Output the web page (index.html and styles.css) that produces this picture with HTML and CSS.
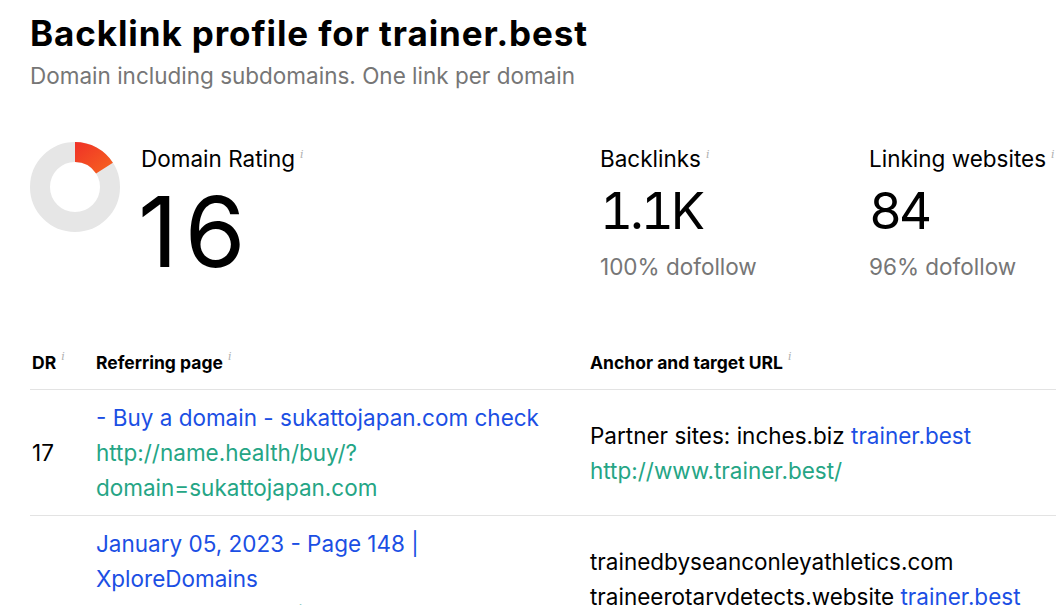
FILE: index.html
```html
<!DOCTYPE html>
<html>
	<head>
		<title>Backlink profile</title>
		<link rel="stylesheet" href="styles.css">
	</head>
	<body>
		<div class="page">
			<h1 class="title">Backlink profile for trainer.best</h1>
			<p class="subtitle">Domain including subdomains. One link per domain</p>

			<div class="stats">
				<div class="stat stat-dr">
					<svg class="donut" width="90" height="90" viewBox="0 0 90 90">
						<defs>
							<linearGradient id="dr-grad" x1="0" y1="0" x2="1" y2="1">
								<stop offset="0" stop-color="#ef3127"/>
								<stop offset="1" stop-color="#f76520"/>
							</linearGradient>
						</defs>
						<circle cx="45" cy="45" r="35" fill="none" stroke="#e6e6e6" stroke-width="20"/>
						<!-- 16% of the ring, starting at 12 o'clock -->
						<path d="M45 0 A45 45 0 0 1 82.9 20.7 L66.1 31.5 A25 25 0 0 0 45 20 Z" fill="url(#dr-grad)"/>
					</svg>
					<div class="stat-body">
						<div class="stat-label">Domain Rating<span class="info">i</span></div>
						<div class="stat-big">16</div>
					</div>
				</div>
				<div class="stat stat-backlinks">
					<div class="stat-label">Backlinks<span class="info">i</span></div>
					<div class="stat-value">1.1K</div>
					<div class="stat-sub">100% dofollow</div>
				</div>
				<div class="stat">
					<div class="stat-label">Linking websites<span class="info">i</span></div>
					<div class="stat-value">84</div>
					<div class="stat-sub">96% dofollow</div>
				</div>
			</div>

			<div class="links">
				<div class="row head">
					<div class="cell">DR<span class="info">i</span></div>
					<div class="cell">Referring page<span class="info">i</span></div>
					<div class="cell">Anchor and target URL<span class="info">i</span></div>
				</div>
				<div class="row">
					<div class="cell">17</div>
					<div class="cell">
						<div><a class="link" href="#">- Buy a domain - sukattojapan.com check</a></div>
						<div><a class="url" href="#">http://name.health/buy/?<br>domain=sukattojapan.com</a></div>
					</div>
					<div class="cell">
						<div>Partner sites: inches.biz <a class="link" href="#">trainer.best</a></div>
						<div><a class="url" href="#">http://www.trainer.best/</a></div>
					</div>
				</div>
				<div class="row">
					<div class="cell">19</div>
					<div class="cell">
						<div><a class="link" href="#">January 05, 2023 - Page 148 |<br>XploreDomains</a></div>
						<div><a class="url" href="#">https://xploredomains.com/<br>2023/01/05/page/148/<br>?domain=trainer.best</a></div>
					</div>
					<div class="cell">
						<div>trainedbyseanconleyathletics.com</div>
						<div>traineerotarydetects.website <a class="link" href="#">trainer.best</a></div>
						<div>trainerbestreviews.com</div>
						<div><a class="url" href="#">http://www.trainer.best/</a></div>
					</div>
				</div>
			</div>
		</div>
	</body>
</html>
```
FILE: styles.css
```css
body{
	margin: 0;
	background-color: white;
	color: black;
	font-family: Inter, "Noto Sans", sans-serif;
	overflow: hidden;
}
.page{
	padding: 13px 0 0 30px;
	width: 1100px;
}
.title{
	margin: 0;
	font-size: 35px;
	line-height: 40px;
	font-weight: 700;
	letter-spacing: 0.9px;
}
.subtitle{
	margin: 9px 0 0 0;
	font-size: 22.5px;
	line-height: 28px;
	color: #767676;
}

.stats{
	display: flex;
	margin-top: 50px;
}
.stat{
	display: flex;
	flex-direction: column;
}
.stat-dr{
	flex-direction: row;
	width: 570px;
	gap: 21px;
}
.stat-backlinks{
	width: 269px;
}
.donut{
	margin-top: 2px;
	flex-shrink: 0;
}
.stat-label{
	font-size: 22.5px;
	line-height: 30px;
}
.info{
	font-family: "DejaVu Serif", serif;
	font-style: italic;
	font-weight: normal;
	font-size: 11px;
	color: #b0b0b0;
	vertical-align: 9px;
	margin-left: 5px;
}
.stat-big{
	font-size: 98px;
	line-height: 98px;
	letter-spacing: 7px;
	margin-top: 9px;
	margin-left: -3px;
}
.stat-value{
	font-size: 51px;
	line-height: 62px;
	font-variant-numeric: tabular-nums;
	letter-spacing: -3px;
	margin-top: 6px;
}
.stat-sub{
	font-size: 22.5px;
	line-height: 30px;
	color: #767676;
	margin-top: 10px;
}

.links{
	margin-top: 55px;
}
.row{
	display: grid;
	grid-template-columns: 64px 494px 1fr;
	border-bottom: 1px solid #e3e3e3;
	font-size: 22.5px;
	line-height: 35px;
}
.row .cell{
	padding: 10px 2px;
	align-self: center;
}
.head{
	font-size: 17.5px;
	line-height: 24px;
	font-weight: 700;
}
.head .cell{
	padding: 8px 2px 14px 2px;
}
a{
	text-decoration: none;
}
.link{
	color: #1b4fe4;
}
.url{
	color: #25a585;
}
```
